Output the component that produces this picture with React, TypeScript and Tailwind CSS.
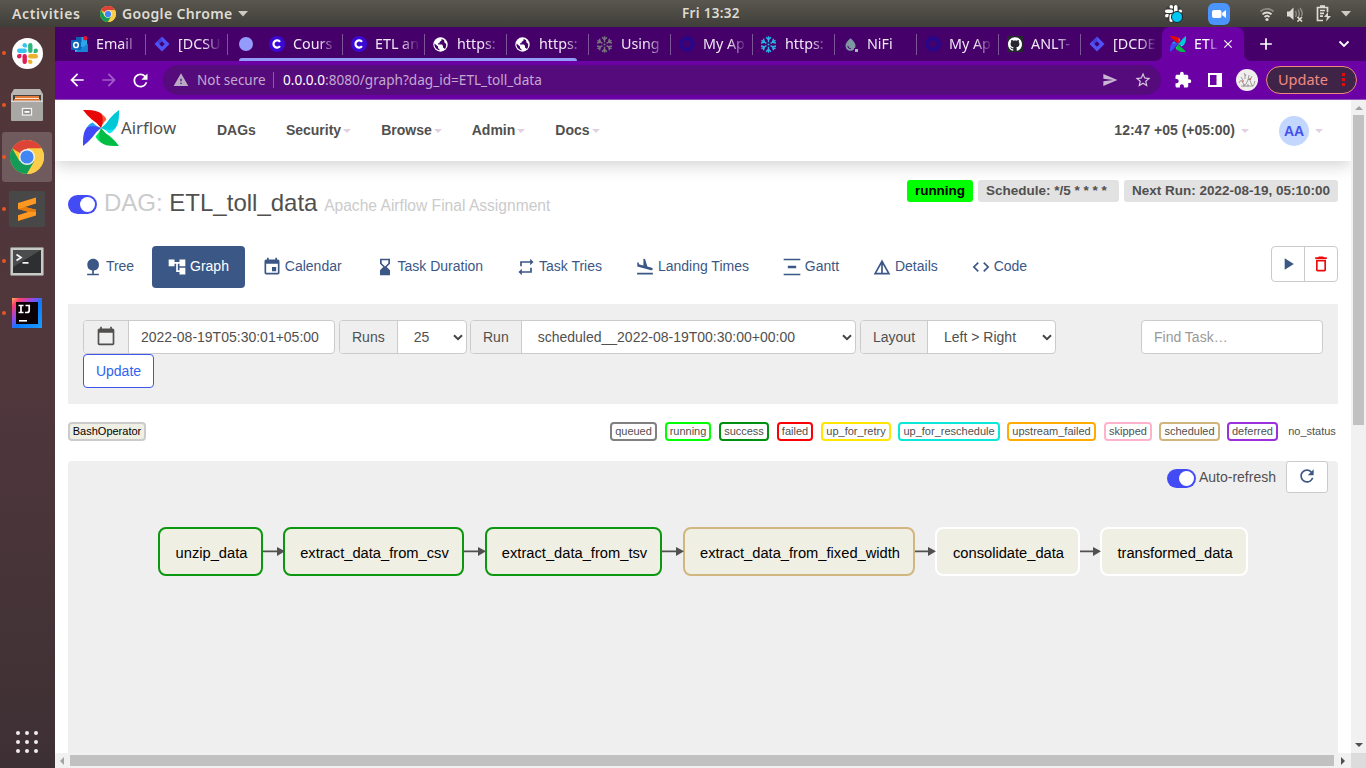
import React from "react";
import {
  MdAccountTree,
  MdArrowBack,
  MdArrowForward,
  MdCalendarToday,
  MdClose,
  MdCode,
  MdDeleteOutline,
  MdEvent,
  MdExtension,
  MdFlightLand,
  MdHourglassBottom,
  MdNature,
  MdPlayArrow,
  MdRefresh,
  MdRepeat,
  MdSend,
  MdStarBorder,
  MdWarning,
  MdAdd,
  MdWaterDrop,
} from "react-icons/md";
import { SiGithub } from "react-icons/si";

/* ---------- drawings ---------- */

const BLADES: [string, string][] = [
  ["#e80707", "#fb5b3b"],
  ["#00c8d6", "#11e3ef"],
  ["#00be45", "#00e75f"],
  ["#4149f5", "#2aa0f5"],
];

function Pinwheel({ size }: { size: number }) {
  return (
    <svg width={size} height={size} viewBox="0 0 36 36" className="shrink-0">
      {BLADES.map(([main, light], i) => (
        <g key={main} transform={`rotate(${i * 90} 18 18)`}>
          <path d="M18 3.500C21 5.200 22.800 7.500 23.400 9.800C21 12 19 15 18 18C19 12 19 8 18 3.500Z" fill={light} />
          <path d="M0 0C9-.2 14.500.6 18.200 3.600C20.500 7.500 20 13 18 18Q14 12.500 8.500 9.200Q4 5.500 0 0Z" fill={main} />
        </g>
      ))}
    </svg>
  );
}

function SlackMark({ size, mono }: { size: number; mono?: boolean }) {
  const c = mono ? ["#fff", "#fff", "#fff", "#fff"] : ["#36c5f0", "#2eb67d", "#ecb22e", "#e01e5a"];
  return (
    <svg width={size} height={size} viewBox="0 0 24 24">
      {c.map((fill, i) => (
        <g key={i} fill={fill} transform={`rotate(${i * 90} 12 12)`}>
          <rect x="0" y="6.300" width="11.300" height="5" rx="2.500" />
          <path d="M8.800 0a2.500 2.500 0 0 1 2.500 2.500V5H8.800a2.500 2.500 0 0 1 0-5Z" />
        </g>
      ))}
    </svg>
  );
}

function ChromeMark({ size }: { size: number }) {
  return (
    <svg width={size} height={size} viewBox="0 0 48 48" className="shrink-0">
      <circle cx="24" cy="24" r="24" fill="#fcc934" />
      <path d="M24 24L3.200 12A24 24 0 0 1 44.800 12H24Z" fill="#dd4437" />
      <path d="M3.200 12A24 24 0 0 0 24 48L34.400 30L24 24L13.600 30Z" fill="#159b58" />
      <path d="M24 48A24 24 0 0 0 44.800 12H24L34.400 30Z" fill="#fccd48" />
      <circle cx="24" cy="24" r="11.300" fill="#f1f1f1" />
      <circle cx="24" cy="24" r="9.300" fill="#4285f4" />
    </svg>
  );
}

function Snowflake({ color }: { color: string }) {
  return (
    <svg width="17" height="17" viewBox="0 0 16 16" fill="none" stroke={color} strokeWidth="1.350">
      {[0, 60, 120, 180, 240, 300].map((a) => (
        <path key={a} transform={`rotate(${a} 8 8)`} d="M8 5.800V.3M5.700 1.200L8 3.600L10.300 1.200" />
      ))}
      <circle cx="8" cy="8" r="1" fill={color} stroke="none" />
    </svg>
  );
}

function OutlookMark() {
  return (
    <svg width="17" height="17" viewBox="0 0 17 17">
      <rect x="5" y="1" width="11" height="10" fill="#28a8ea" />
      <rect x="5" y="1" width="5.500" height="5" fill="#0f5fb5" />
      <path d="M4 8L10 12L16.500 8V16H4Z" fill="#50b5f3" />
      <path d="M4 16L16.500 8V16Z" fill="#1784d6" />
      <rect x="0" y="4" width="10" height="10" rx="1" fill="#0a64be" />
      <ellipse cx="5" cy="9" rx="2.300" ry="2.600" fill="none" stroke="#fff" strokeWidth="1.500" />
      <circle cx="14.200" cy="2.300" r="2.200" fill="#e8112d" />
    </svg>
  );
}

function CourseraMark() {
  return (
    <svg width="16" height="16" viewBox="0 0 16 16">
      <circle cx="8" cy="8" r="8" fill="#3a09d6" />
      <path d="M11 5.900A3.600 3.600 0 1 0 11 10.100" fill="none" stroke="#fff" strokeWidth="2.200" />
    </svg>
  );
}

function RingMark() {
  return (
    <svg width="16" height="16" viewBox="0 0 16 16">
      <circle cx="8" cy="8" r="5.700" fill="none" stroke="#290687" strokeWidth="4.400" />
    </svg>
  );
}

function JiraMark() {
  return (
    <svg width="16" height="16" viewBox="0 0 16 16">
      <path d="M8 .5L15.500 8L8 15.500L.5 8Z" fill="#4f52f7" />
      <path d="M8 5.300L10.700 8L8 10.700L5.300 8Z" fill="#46006a" />
      <path d="M8 .8V5.200L5 8L3.500 5.500Z" fill="#3637c9" opacity=".6" />
    </svg>
  );
}

function GlobeMark() {
  return (
    <svg width="15" height="15" viewBox="0 0 15 15">
      <circle cx="7.500" cy="7.500" r="7.200" fill="#fff" />
      <path d="M1.500 6.500L5 9.500V11L7.200 13.300Q3.500 13 2 10Q1.200 8.200 1.500 6.500Z" fill="#46006a" />
      <path d="M8.500 2V3.500L6.500 5V6.300H5V7.600H9L10 9V10.500L12 12Q13.500 10 13.200 7L11.500 5.500L11 3Z" fill="#46006a" />
    </svg>
  );
}

/* ---------- desktop ---------- */

function TopBar() {
  return (
    <header className="flex h-[27px] shrink-0 items-center bg-linear-to-b from-[#5a574f] to-[#3f3e39] text-[14px] font-semibold text-[#dfdbd2]">
      <span className="ml-3 w-[88px] tracking-[0.6px]">Activities</span>
      <ChromeMark size={16} />
      <span className="ml-[6px] w-[112px] tracking-[0.35px] whitespace-nowrap">Google Chrome</span>
      <svg width="10" height="6" className="ml-[4px]"><path d="M0 0H10L5 5.500Z" fill="#cfcbc3" /></svg>
      <span className="ml-[434px] w-[64px] text-[13.500px] tracking-[0.3px] whitespace-nowrap">Fri 13:32</span>
      <div className="relative ml-[418px] h-[20px] w-[20px]">
        <svg width="20" height="20" viewBox="0 0 20 20"><circle cx="9.500" cy="9.500" r="9" fill="#2f2e2b" opacity=".6" /></svg>
        <span className="absolute top-[1px] left-[1px]"><SlackMark size={17} mono /></span>
        <span className="absolute top-[7px] left-[7px] h-[12px] w-[12px] rounded-full border border-[#222] bg-[#00c8f5]" />
      </div>
      <svg width="22" height="22" viewBox="0 0 22 22" className="ml-[24px]">
        <rect width="22" height="22" rx="6" fill="#4a94fb" />
        <rect x="4" y="7" width="9.500" height="8" rx="2" fill="#fff" />
        <path d="M14.200 9.800L18 7V15L14.200 12.200Z" fill="#fff" />
      </svg>
      <svg width="16" height="16" viewBox="0 0 16 16" className="ml-[29px]" fill="none" strokeWidth="1.800">
        <path d="M1.500 5.500A9.500 9.500 0 0 1 14.500 5.500" stroke="#8f8c85" />
        <path d="M3.500 8.300A6.500 6.500 0 0 1 12.500 8.300" stroke="#dfdbd2" />
        <path d="M5.500 11A3.600 3.600 0 0 1 10.500 11" stroke="#dfdbd2" />
        <circle cx="8" cy="13.500" r="1.600" fill="#dfdbd2" />
      </svg>
      <svg width="18" height="16" viewBox="0 0 18 16" className="ml-[11px]" fill="none" strokeWidth="1.400">
        <path d="M1 5.500H3.500L7.500 1.500V14L3.500 10.500H1Z" fill="#dfdbd2" />
        <path d="M9.500 5Q11 8 9.500 11M12 3.500Q14.500 8 12 12M14 2Q17.500 7 15.500 10" stroke="#8f8c85" />
        <path d="M11.500 11L16 15.500M16 11L11.500 15.500" stroke="#dfdbd2" strokeWidth="1.700" />
      </svg>
      <svg width="16" height="17" viewBox="0 0 16 17" className="ml-[12px]" fill="none" stroke="#dfdbd2" strokeWidth="1.700">
        <path d="M7 15.500H1.500V2.500H11.500V7M4 1.200H9M4 5.500H9M4 8.300H8M4 11.200H7" />
        <path d="M12 7L8 12H11L10 16.500L15 11H12Z" fill="#dfdbd2" stroke="none" />
      </svg>
      <svg width="10" height="6" className="ml-[9px]"><path d="M0 0H10L5 5.500Z" fill="#cfcbc3" /></svg>
    </header>
  );
}

function FilesIcon() {
  return (
    <svg width="34" height="34" viewBox="0 0 34 34">
      <path d="M4 1H30L33 6V31Q33 33 31 33H3Q1 33 1 31V6Z" fill="#b9b7b4" />
      <path d="M3 7H31V14H3Z" fill="#45403c" />
      <rect x="5" y="8" width="24" height="2" fill="#e07b3c" />
      <rect x="5" y="10" width="24" height="1" fill="#fbe3c4" />
      <rect x="4" y="11" width="26" height="2" fill="#d96f2d" />
      <rect x="1" y="13" width="32" height="20" rx="1.500" fill="#a9a7a4" />
      <rect x="1" y="12.500" width="32" height="1.500" fill="#d9d8d6" />
      <rect x="12.500" y="20.500" width="9" height="6.500" fill="#8c8a87" stroke="#f2f2f2" strokeWidth="1.300" />
      <rect x="14.500" y="23" width="5" height="1.800" fill="#fff" />
    </svg>
  );
}

function SublimeIcon() {
  return (
    <svg width="36" height="36" viewBox="0 0 36 36">
      <rect width="36" height="36" rx="2" fill="#484848" />
      <path d="M9 12L27 6.500V12.500L16 16L27 18.800V24.500L9 30V24.300L19.500 20.800L9 18Z" fill="#ff9820" />
      <path d="M9 18L16 16L27 18.800V21L19.500 20.800Z" fill="#e87c0c" />
    </svg>
  );
}

function TerminalIcon() {
  return (
    <svg width="34" height="29" viewBox="0 0 34 29">
      <rect x=".5" y=".5" width="33" height="28" rx="1" fill="#c9c9c6" stroke="#8a8a88" />
      <rect x="3" y="3" width="28" height="23" fill="#2d2f30" />
      <path d="M3 3H31L3 20Z" fill="#4a4c4d" />
      <path d="M6.500 7.500L11 10.500L6.500 13.500M12.500 15.800H18.500" stroke="#f4f4f4" strokeWidth="1.800" fill="none" />
    </svg>
  );
}

function IntelliJIcon() {
  return (
    <svg width="30" height="30" viewBox="0 0 30 30">
      <defs>
        <linearGradient id="ij" x1="0" y1="0" x2="1" y2="1">
          <stop offset="0" stopColor="#fdb060" />
          <stop offset=".15" stopColor="#fe3c6d" />
          <stop offset=".38" stopColor="#8a4bf0" />
          <stop offset=".55" stopColor="#087cfa" />
          <stop offset="1" stopColor="#1e9bff" />
        </linearGradient>
      </defs>
      <rect width="30" height="30" fill="url(#ij)" />
      <rect x="4" y="4" width="22" height="22" fill="#0a0006" />
      <path d="M6.500 7.500H11.500M9 7.500V14.500M6.500 14.500H11.500M13.500 7.500H17.200V12.500Q17.200 14.500 15 14.500H13" stroke="#fff" strokeWidth="1.700" fill="none" />
      <rect x="7" y="22" width="8" height="1.600" fill="#fff" />
    </svg>
  );
}

function Dock() {
  const items = [
    <span key="s" className="flex h-[31px] w-[31px] items-center justify-center rounded-full bg-white"><SlackMark size={21} /></span>,
    <FilesIcon key="f" />,
    <ChromeMark key="c" size={34} />,
    <SublimeIcon key="u" />,
    <TerminalIcon key="t" />,
    <IntelliJIcon key="i" />,
  ];
  return (
    <aside className="flex w-[55px] shrink-0 flex-col bg-linear-to-b from-[#513639] via-[#4f373c] to-[#3d3034]">
      {items.map((icon, i) => (
        <div key={i} className="relative flex h-[52px] items-center justify-center pr-px">
          {i === 2 && <span className="absolute inset-y-[1px] right-[3px] left-[2px] rounded-[3px] bg-white/18" />}
          <span className="absolute left-[2px] h-[4px] w-[4px] rounded-full bg-[#e95420]" />
          <span className="relative">{icon}</span>
        </div>
      ))}
      <div className="mt-auto mb-[15px] ml-[16px] grid w-[22px] grid-cols-3 gap-[5px]">
        {Array.from({ length: 9 }, (_, i) => (
          <span key={i} className="h-[4px] w-[4px] rounded-full bg-[#f0eeee]" />
        ))}
      </div>
    </aside>
  );
}

/* ---------- browser ---------- */

function BrowserTab({ icon, label, last }: { icon: React.ReactNode; label: string; last?: boolean }) {
  return (
    <div className={`flex h-[21px] shrink-0 items-center pl-[7px] ${last ? "w-[81px]" : "w-[82px] border-r border-[#7c5797]"}`}>
      <span className="flex w-[17px] shrink-0 justify-center">{icon}</span>
      <span className="ml-[8px] text-[14.300px] whitespace-nowrap text-[#f0e9f5] [mask-image:linear-gradient(to_right,#000_26px,rgba(0,0,0,.15)_41px)]">{label}</span>
    </div>
  );
}

function TabStrip() {
  return (
    <div className="relative flex h-[34px] items-center bg-[#46006a] pl-[9px]">
      <BrowserTab icon={<OutlookMark />} label="Email" />
      <BrowserTab icon={<JiraMark />} label="[DCSU" />
      <span className="mr-[8px] ml-[11px] h-[14px] w-[14px] shrink-0 rounded-full bg-[#949bfb]" />
      <BrowserTab icon={<CourseraMark />} label="Cours" />
      <BrowserTab icon={<CourseraMark />} label="ETL an" />
      <BrowserTab icon={<GlobeMark />} label="https:" />
      <BrowserTab icon={<GlobeMark />} label="https:" />
      <BrowserTab icon={<Snowflake color="#77757c" />} label="Using" />
      <BrowserTab icon={<RingMark />} label="My Ap" />
      <BrowserTab icon={<Snowflake color="#29b5e8" />} label="https:" />
      <BrowserTab
        icon={
          <span className="relative">
            <MdWaterDrop size={15} color="#7e98a2" />
            <span className="absolute right-[-1px] bottom-[-1px] h-[5px] w-[5px] border border-[#46006a] bg-[#a3b7b8]" />
          </span>
        }
        label="NiFi"
      />
      <BrowserTab icon={<RingMark />} label="My Ap" />
      <BrowserTab icon={<span className="bg-[#24292e] p-[1px]"><SiGithub size={14} color="#fff" /></span>} label="ANLT-" />
      <BrowserTab icon={<JiraMark />} label="[DCDE" last />
      <div className="relative flex h-[34px] w-[82px] shrink-0 items-center self-end rounded-t-[8px] bg-[#6b00a5] pl-[8px]">
        <svg width="98" height="8" className="absolute bottom-0 left-[-8px]" fill="#6b00a5">
          <path d="M0 8Q8 8 8 0V8ZM98 8Q90 8 90 0V8Z" />
        </svg>
        <Pinwheel size={16} />
        <span className="ml-[8px] w-[24px] text-[14.300px] whitespace-nowrap text-white [mask-image:linear-gradient(to_right,#000_55%,rgba(0,0,0,.15)_98%)]">ETL</span>
        <MdClose size={14} color="#fff" className="ml-[3px]" stroke="#fff" />
      </div>
      <MdAdd size={20} color="#fff" className="ml-[12px]" />
      <svg width="12" height="8" viewBox="0 0 12 8" className="ml-[62px]"><path d="M1.500 1.500L6 6L10.500 1.500" stroke="#fff" strokeWidth="1.800" fill="none" /></svg>
      <span className="absolute bottom-0 left-[184px] h-[3px] w-[338px] rounded-t-[3px] bg-[#949bfb]" />
    </div>
  );
}

function Toolbar() {
  return (
    <div className="flex h-[39px] items-center border-b border-[#9450bb] bg-[#6b00a5] pl-[13px]">
      <MdArrowBack size={20} color="#fff" className="-ml-[1px]" />
      <MdArrowForward size={20} color="#a55dcb" className="ml-[12px]" />
      <MdRefresh size={21} color="#fff" className="ml-[11px]" />
      <div className="ml-[12px] flex h-[30px] w-[998px] items-center rounded-full bg-[#560b7c] pl-[10px] text-[13.500px] text-[#c2a9d0]">
        <MdWarning size={16} color="#b9aac3" />
        <span className="ml-[8px] w-[68px] whitespace-nowrap">Not secure</span>
        <span className="ml-[8px] h-[16px] w-px bg-[#8a5ba5]" />
        <span className="ml-[9px] text-[13.600px] whitespace-nowrap"><span className="text-white">0.0.0.0</span>:8080/graph?dag_id=ETL_toll_data</span>
        <MdSend size={16} color="#c9b5d5" className="mr-[16px] ml-auto" />
        <MdStarBorder size={18} color="#d6c6df" className="mr-[9px]" />
      </div>
      <MdExtension size={18} color="#fff" className="ml-[13px]" />
      <svg width="14" height="14" className="ml-[16px]"><rect x="1" y="1" width="12" height="12" fill="none" stroke="#fff" strokeWidth="2" /><rect x="8.500" y="1" width="5" height="12" fill="#fff" /></svg>
      <svg width="22" height="22" viewBox="0 0 22 22" className="ml-[14px]">
        <circle cx="11" cy="11" r="11" fill="#f1efee" />
        <path d="M3 14Q5 9 7 14T11 13T15 14T19 12M5 8L7 11M9 5V10M13 6L12 11M16 7L14 11M5 17H17M8 4L10 7M12 15V18M8 15V18" stroke="#8d8785" strokeWidth=".8" fill="none" />
        <circle cx="7" cy="12" r=".8" fill="#c0392b" /><circle cx="14" cy="10" r=".8" fill="#c0392b" />
      </svg>
      <div className="ml-[8px] flex h-[28px] w-[91px] items-center rounded-full border border-[#f08a7e] bg-[#3f2447] pl-[11px] text-[14.500px] text-[#f28b82]">
        Update
        <svg width="4" height="14" className="mr-[10px] ml-auto" fill="#e30b0b"><rect width="3" height="3" /><rect y="5" width="3" height="3" /><rect y="10" width="3" height="3" /></svg>
      </div>
    </div>
  );
}

/* ---------- Airflow page ---------- */

const Caret = ({ className = "" }: { className?: string }) => (
  <svg width="8" height="4" className={className}><path d="M0 0H8L4 4Z" fill="#e3cfe2" /></svg>
);

function Toggle() {
  return (
    <span className="flex h-[19px] w-[29px] shrink-0 items-center justify-end rounded-full bg-[#434cf4] pr-[2px]">
      <span className="h-[15px] w-[15px] rounded-full bg-white" />
    </span>
  );
}

function Navbar() {
  return (
    <nav className="relative flex h-[61px] shrink-0 items-center bg-white pl-[28px] text-[14px] font-bold text-[#51504f] shadow-[0_4px_16px_rgba(0,0,0,0.18)]">
      <span className="-mt-[6px]"><Pinwheel size={36} /></span>
      <span className="mt-[-5px] ml-[2px] w-[66px] font-['Noto_Sans'] text-[16.800px] font-normal">Airflow</span>
      <div className="ml-[30px] flex gap-[30px]">
        <span>DAGs</span>
        {["Security", "Browse", "Admin", "Docs"].map((n) => (
          <span key={n} className="flex items-center">
            {n}
            <Caret className="ml-[2px]" />
          </span>
        ))}
      </div>
      <span className="ml-auto">12:47 +05 (+05:00)</span>
      <Caret className="ml-[6px]" />
      <span className="ml-[30px] flex h-[30px] w-[30px] items-center justify-center rounded-full bg-[#c3d7fe] pt-[2px] text-[#4350ee]">AA</span>
      <Caret className="mr-[28px] ml-[6px]" />
    </nav>
  );
}

const GanttIcon = () => (
  <svg width="20" height="20" viewBox="0 0 24 24" fill="currentColor"><path d="M22 2v2H2V2h20zM7 10.500v3h10v-3H7zM2 20v2h20v-2H2z" /></svg>
);
const DetailsIcon = () => (
  <svg width="20" height="20" viewBox="0 0 24 24" fill="currentColor"><path d="M12 3L2 21h20L12 3zm1 5.920L18.600 19H13V8.920zm-2 0V19H5.400L11 8.920z" /></svg>
);

const VIEWS: [string, React.ReactNode][] = [
  ["Tree", <MdNature size={20} />],
  ["Graph", <MdAccountTree size={20} />],
  ["Calendar", <MdEvent size={20} />],
  ["Task Duration", <MdHourglassBottom size={20} />],
  ["Task Tries", <MdRepeat size={20} />],
  ["Landing Times", <MdFlightLand size={20} />],
  ["Gantt", <GanttIcon />],
  ["Details", <DetailsIcon />],
  ["Code", <MdCode size={20} />],
];

function ViewTabs() {
  return (
    <div className="mt-[29px] flex h-[42px] text-[14px] text-[#3b5786]">
      {VIEWS.map(([label, icon]) => (
        <span
          key={label}
          className={
            label === "Graph"
              ? "mr-[2px] flex items-center rounded-[4px] bg-[#3b5786] pr-[16px] pl-[15px] text-white"
              : "mr-[2px] flex items-center pr-[16px] pl-[15px]"
          }
        >
          <span>{icon}</span>
          <span className="mb-[2px] ml-[2.890px] whitespace-nowrap">{label}</span>
        </span>
      ))}
      <div className="ml-auto flex h-[36px] w-[67px] rounded-[4px] border border-[#cbcbcb]">
        <span className="flex flex-1 items-center justify-center border-r border-[#cbcbcb]"><MdPlayArrow size={20} /></span>
        <span className="flex flex-1 items-center justify-center"><MdDeleteOutline size={20} color="#ee0a0a" /></span>
      </div>
    </div>
  );
}

const Chevron = () => (
  <svg width="10" height="7" viewBox="0 0 10 7" className="mr-[3px] ml-auto"><path d="M1 1.200L5 5.200L9 1.200" stroke="#454443" strokeWidth="2" fill="none" /></svg>
);

function Field({ label, value, className }: { label: string; value: string; className: string }) {
  return (
    <div className={`flex h-[34px] items-stretch overflow-hidden rounded-[4px] border border-[#cbcbcb] bg-white ${className}`}>
      <span className="flex items-center border-r border-[#cbcbcb] bg-[#efefef] px-[12px]">{label}</span>
      <span className="flex flex-1 items-center pl-[16px]">
        {value}
        <Chevron />
      </span>
    </div>
  );
}

function Filters() {
  return (
    <div className="mt-[16px] h-[100px] bg-[#efefef] px-[15px] pt-[16px] text-[14px] text-[#51504f]">
      <div className="flex">
        <div className="flex h-[34px] w-[252px] items-stretch overflow-hidden rounded-[4px] border border-[#cbcbcb] bg-white">
          <span className="flex w-[45px] items-center justify-center border-r border-[#cbcbcb] bg-[#efefef] pb-[2px]"><MdCalendarToday size={20} /></span>
          <span className="flex items-center pl-[12px]">2022-08-19T05:30:01+05:00</span>
        </div>
        <Field label="Runs" value="25" className="ml-[4px] w-[128px]" />
        <Field label="Run" value="scheduled__2022-08-19T00:30:00+00:00" className="ml-[3px] w-[386px]" />
        <Field label="Layout" value="Left > Right" className="ml-[4px] w-[196px]" />
        <div className="ml-auto flex h-[34px] w-[182px] items-center rounded-[4px] border border-[#cbcbcb] bg-white pl-[12px] text-[#999]">Find Task…</div>
      </div>
      <button className="flex h-[34px] w-[71px] items-center justify-center rounded-[4px] border border-[#3d56f0] bg-white text-[#2f62f0]">Update</button>
    </div>
  );
}

const STATES: [string, string, string][] = [
  ["queued", "border-[#808080]", "w-[47px] mr-[8px]"],
  ["running", "border-[#00ff00]", "w-[46px] mr-[8px]"],
  ["success", "border-[#008f10]", "w-[50px] mr-[8px]"],
  ["failed", "border-[#fb0007]", "w-[36px] mr-[8px]"],
  ["up_for_retry", "border-[#ffe500]", "w-[70px] mr-[7px]"],
  ["up_for_reschedule", "border-[#0ce8d8]", "w-[102px] mr-[7px]"],
  ["upstream_failed", "border-[#ffab00]", "w-[89px] mr-[8px]"],
  ["skipped", "border-[#ffb3cb]", "w-[48px] mr-[7px]"],
  ["scheduled", "border-[#d2b47f]", "w-[61px] mr-[7px]"],
  ["deferred", "border-[#9b30dc]", "w-[51px] mr-[8px]"],
  ["no_status", "border-white", "w-[52px]"],
];

function Legend() {
  return (
    <div className="mt-[18px] flex h-[19px] items-stretch justify-between text-[11px] leading-[15px] text-[#51504f]">
      <span className="flex w-[78px] justify-center rounded-[4px] border-2 border-[#cbcbcb] bg-[#f0efe3] text-black">BashOperator</span>
      <div className="flex">
        {STATES.map(([name, border, width]) => (
          <span key={name} className={`flex shrink-0 justify-center rounded-[4px] border-2 ${border} ${width}`}>{name}</span>
        ))}
      </div>
    </div>
  );
}

const NODES: [string, string, string][] = [
  ["unzip_data", "left-[90px] w-[105px]", "border-[#0b970f]"],
  ["extract_data_from_csv", "left-[215px] w-[181px]", "border-[#0b970f]"],
  ["extract_data_from_tsv", "left-[417px] w-[177px]", "border-[#0b970f]"],
  ["extract_data_from_fixed_width", "left-[615px] w-[232px]", "border-[#d2b680]"],
  ["consolidate_data", "left-[867px] w-[145px]", "border-white"],
  ["transformed_data", "left-[1032px] w-[148px]", "border-white"],
];
const EDGES: [number, number][] = [[195, 217], [396, 418], [594, 616], [847, 868], [1012, 1033]];

function Graph() {
  return (
    <div className="relative mt-[20px] flex-1 rounded-t-[4px] bg-[#efefef]">
      <div className="flex items-start justify-end pr-[10px] text-[14px] text-[#51504f]">
        <span className="mt-[8px]"><Toggle /></span>
        <span className="mt-[6px] ml-[3px]">Auto-refresh</span>
        <span className="ml-[10px] flex h-[32px] w-[42px] items-center justify-center rounded-[3px] border border-[#cbcbcb] bg-white pb-[2px] text-[#3b5786]"><MdRefresh size={20} /></span>
      </div>
      {NODES.map(([name, place, border]) => (
        <div key={name} className={`absolute top-[66px] flex h-[49px] items-center justify-center rounded-[8px] border-2 bg-[#f0efe3] pt-[4px] pl-[2px] text-[14.700px] whitespace-nowrap text-black ${place} ${border}`}>
          {name}
        </div>
      ))}
      <svg width="1200" height="120" className="absolute top-0 left-0" fill="#51504f">
        {EDGES.map(([a, b]) => (
          <path key={a} d={`M${a} 89.500H${b - 8}V86L${b} 90.300L${b - 8} 95V91.200H${a}Z`} />
        ))}
      </svg>
    </div>
  );
}

function AirflowPage() {
  return (
    <div className="flex min-w-0 flex-1 flex-col overflow-hidden bg-white font-['Liberation_Sans',Arial,sans-serif]">
      <Navbar />
      <main className="flex flex-1 flex-col px-[13px] pt-[19px]">
        <div className="flex h-[37px] items-start">
          <span className="mt-[15px]"><Toggle /></span>
          <h1 className="mt-[5px] ml-[7px] text-[24px] whitespace-nowrap text-[#51504f]">
            <span className="text-[#cbcbcb]">DAG:</span> ETL_toll_data <span className="text-[15.600px] text-[#cbcbcb]">Apache Airflow Final Assignment</span>
          </h1>
          <div className="ml-auto flex gap-[5px] text-[13.500px] leading-[22px] font-bold whitespace-pre text-[#51504f]">
            <span className="h-[22px] w-[66px] rounded-[3px] bg-[#00ff00] text-center text-black">running</span>
            <span className="h-[22px] w-[141px] rounded-[3px] bg-[#e2e2e2] pl-[8px]">Schedule: */5 * * * *</span>
            <span className="h-[22px] w-[214px] rounded-[3px] bg-[#e2e2e2] pl-[8px]">Next Run: 2022-08-19, 05:10:00</span>
          </div>
        </div>
        <ViewTabs />
        <Filters />
        <Legend />
        <Graph />
      </main>
    </div>
  );
}

function VerticalScrollbar() {
  return (
    <div className="flex w-[15px] shrink-0 flex-col items-center bg-[#f1f1f1]">
      <svg width="8" height="4" className="mt-[6px]"><path d="M0 4H8L4 0Z" fill="#a3a3a3" /></svg>
      <span className="mt-[5px] h-[310px] w-[11px] bg-[#c1c1c1]" />
      <svg width="8" height="4" className="mt-auto mb-[6px]"><path d="M0 0H8L4 4Z" fill="#505050" /></svg>
    </div>
  );
}

export default function App() {
  return (
    <div className="flex h-[768px] w-[1366px] flex-col overflow-hidden font-['Noto_Sans',sans-serif]">
      <TopBar />
      <div className="flex min-h-0 flex-1">
        <Dock />
        <div className="flex min-w-0 flex-1 flex-col">
          <TabStrip />
          <Toolbar />
          <div className="flex min-h-0 flex-1">
            <AirflowPage />
            <VerticalScrollbar />
          </div>
          <div className="flex h-[15px] shrink-0 items-center bg-[#f1f1f1]">
            <svg width="4" height="8" className="ml-[5px]"><path d="M4 0V8L0 4Z" fill="#a3a3a3" /></svg>
            <span className="ml-[6px] h-[11px] w-[1264px] bg-[#c1c1c1]" />
            <svg width="4" height="8" className="ml-[7px]"><path d="M0 0V8L4 4Z" fill="#505050" /></svg>
            <span className="ml-auto h-[15px] w-[15px] bg-[#dcdcdc]" />
          </div>
        </div>
      </div>
    </div>
  );
}
